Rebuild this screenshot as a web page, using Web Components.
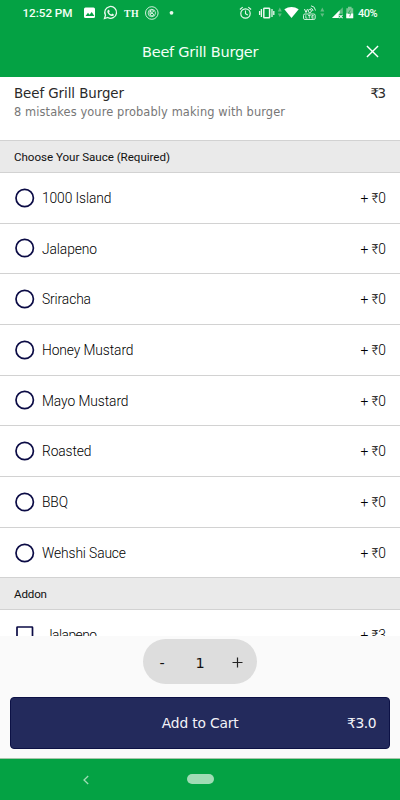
<!DOCTYPE html>
<html lang="en">
<head>
<meta charset="utf-8">
<title>Beef Grill Burger</title>
<style>
html,body{margin:0;height:100%;overflow:hidden}
</style>
</head>
<body>
<burger-screen></burger-screen>
<script>
const define = (name, html, init) => {
  const t = document.createElement('template');
  t.innerHTML = html;
  customElements.define(name, class extends HTMLElement {
    constructor() {
      super();
      this.attachShadow({mode: 'open'}).append(t.content.cloneNode(true));
    }
    connectedCallback() { if (init) init(this, this.shadowRoot); }
  });
};

/* One line of text whose tracking is spread to fill the width given in w. */
define('fit-text', `<style>
:host{display:block;white-space:pre;flex:none}
span{display:inline-block}
</style><span></span>`, (el, root) => {
  const s = root.querySelector('span');
  s.textContent = el.getAttribute('text');
  const w = +el.getAttribute('w');
  const n = s.textContent.length;
  const gap = (w - s.getBoundingClientRect().width) / Math.max(1, n - 1);
  s.style.letterSpacing = gap + 'px';
  s.style.marginRight = -gap + 'px';
});

define('status-bar', `<style>
:host{display:block;height:26px;color:#fff}
svg{display:block}
text{fill:#f4fff6;font-family:Roboto,sans-serif;font-weight:500}
</style>
<svg width="400" height="26" viewBox="0 0 400 26" fill="none" stroke="#e9f8ed">
<text x="22.5" y="17.3" font-size="11.700" textLength="50" stroke="none">12:52 PM</text>
<path d="M85.500 7.500h8q1.500 0 1.500 1.500v7.500q0 1.500-1.500 1.500h-8q-1.500 0-1.500-1.500V9q0-1.500 1.500-1.500z" fill="#fff" stroke="none"/>
<path d="M85.500 16l2.500-3.200 1.600 1.900 2.100-2.800 2.700 4.100z" fill="#04a244" stroke="none"/>
<path d="M104.500 18.500l1-3.300a5.900 5.900 0 1 1 2.300 2.300z" stroke-width="1.300"/>
<path d="M107.800 10.200c.7-.8 1.300-.5 1.600.4l.3.900-.7.900c.5 1 1.300 1.700 2.300 2.100l.9-.9 1.700.9c.2 1.300-1.300 1.900-2.600 1.500-2.300-.7-4.200-2.900-4-4.800z" fill="#e9f8ed" stroke="none"/>
<text x="124" y="16.500" font-size="9.800" textLength="14.500" style="font-family:'Liberation Serif',serif;font-weight:700" stroke="none">TH</text>
<circle cx="151.800" cy="13" r="6.300" stroke-width=".9"/>
<circle cx="151.800" cy="13" r="3.700" stroke-width=".8"/>
<path d="M150 11l2-1.500 1.800 1.600-1.800 1.400-2-1.500v3.700l2 1.500 2-1.500-2-1.700-2 1.500" stroke-width="1"/>
<circle cx="171.500" cy="12.800" r="1.900" fill="#e9f8ed" stroke="none"/>
<circle cx="245.500" cy="13.500" r="4.700" stroke-width="1.200"/>
<path d="M245.500 10.500v3.300l2.300 1.300M239.900 9.500l2.800-2.400M251.100 9.500l-2.800-2.400" stroke-width="1.100"/>
<rect x="263.800" y="8.200" width="5.800" height="9.600" rx=".6" stroke-width="1.500"/>
<path d="M261.400 9v8M259.600 11v4M272 9v8M273.800 11v4" stroke-width="1.300"/>
<g fill="#63bd84" stroke="none"><path d="M277.800 11.500l2-4 2 4zM277.800 13.500h4l-2 3.500zM320.300 11.500l2-4 2 4zM320.300 13.500h4l-2 3.500z"/></g>
<path d="M284.300 9.300q7.200-4.400 14.400 0L291.500 18z" fill="#fff" stroke="none"/>
<path d="M304.500 9l1.500 3.500 1.500-3.500" stroke-width="1"/>
<circle cx="309.800" cy="11" r="1.600" stroke-width=".9"/>
<path d="M310.500 8.200q2.300.2 2.500 2.800M311 5.800q4 .4 4.500 4.700" stroke-width=".9"/>
<rect x="303.500" y="14" width="11.700" height="5.500" rx="1.400" stroke-width=".9"/>
<path d="M305.800 15.200v2.900h1.600M308 15.500h2.600M309.300 15.500v3M313.700 15.500h-1.800v2.700h1.800M312 16.900h1.500" stroke-width=".8"/>
<path d="M332 18L342.800 7.200V18z" fill="#63bd84" stroke="none"/>
<path d="M332 18l7.700-7.800V18z" fill="#fff" stroke="none"/>
<path d="M338.800 13.800h5v5h-5z" fill="#04a244" stroke="none"/>
<path d="M339.300 14.800l3.300 3.300M342.600 14.800l-3.300 3.300" stroke-width="1.100"/>
<path d="M346.300 8.200h1.700V6.800h3.600v1.400h1.600v10h-6.900z" fill="#79c894" stroke="none"/>
<path d="M346.300 13.500h6.900v4.700h-6.900z" fill="#fff" stroke="none"/>
<path d="M350.500 9.700l-2.200 3.600h2.400l-1 3.200" stroke="#04a244" stroke-width=".7"/>
<text x="358" y="17" font-size="11" textLength="19.500" stroke="none">40%</text>
</svg>`);

define('app-header', `<style>
:host{display:grid;grid-template-columns:1fr 116px 1fr;height:51px;align-items:center;color:#f5fff7}
fit-text{font:14.500px/20px "DejaVu Sans",sans-serif;padding-top:1px}
svg{justify-self:end;margin:0 21.500px 1px 0;display:block}
</style><span></span><fit-text text="Beef Grill Burger" w="116.500"></fit-text>
<svg width="13" height="13" viewBox="0 0 14 14"><path d="M1 1l12 12M13 1L1 13" stroke="#fff" stroke-width="1.500"/></svg>`);

define('item-summary', `<style>
:host{display:flex;justify-content:space-between;box-sizing:border-box;height:63px;padding:8px 14px 0;background:#fff;font-family:"DejaVu Sans",sans-serif}
.t{font-size:13.400px;line-height:18px;color:#2a2a2a}
.s{font-size:11.400px;line-height:18px;color:#777}
</style><div><fit-text class="t" text="Beef Grill Burger" w="110"></fit-text><fit-text class="s" text="8 mistakes youre probably making with burger" w="271"></fit-text></div>
<fit-text class="t" text="₹3" w="15.500"></fit-text>`);

define('section-head', `<style>
:host{display:flex;align-items:center;box-sizing:border-box;height:31.900px;padding:1px 14px 0;background:#eaeaea;border-top:1px solid #d2d2d2;font:400 11.600px/16px Roboto,sans-serif;color:#111}
</style><div></div>`, (el, r) => {
  r.querySelector('div').innerHTML =
    '<fit-text text="' + el.getAttribute('label') + '" w="' + el.getAttribute('w') + '"></fit-text>';
});

define('option-row', `<style>
:host{display:flex;align-items:center;box-sizing:border-box;height:50.700px;padding:0 14px 0 15px;background:#fff;border-top:1px solid #d2d2d2;font:300 13.800px/20px Roboto,sans-serif;color:#000}
svg{flex:none;width:20px;height:20px;margin-right:7px}
:host([box]) svg{margin-right:10px}
.c,:host([box]) .r{display:none}:host([box]) .c{display:inline}
.n,.p{padding-top:.5px}
.p{margin-left:auto}
</style><svg viewBox="0 0 20 20" fill="none" stroke="#0b0b45" stroke-width="1.700"><circle class="r" cx="9.700" cy="10" r="8.700"/><rect class="c" x="2" y="2" width="15.500" height="16" rx=".5"/></svg>
<div class="n"></div><div class="p"></div>`, (el, r) => {
  const fit = (q, text, w) => { r.querySelector(q).innerHTML = `<fit-text text="${text}" w="${w}"></fit-text>`; };
  fit('.n', el.getAttribute('label'), el.getAttribute('w'));
  fit('.p', '+ ₹' + (el.getAttribute('price') || 0), 25.5);
});

define('quantity-stepper', `<style>
:host{display:grid;grid-template-columns:repeat(3,1fr);align-items:center;justify-items:center;width:114px;height:45px;border-radius:23px;background:#ddd;color:#111;font:14.500px/22px "DejaVu Sans",sans-serif}
span{padding-top:2px}
svg{margin:2px 2px 0 0}
</style><span>-</span><span>1</span><svg width="11" height="11" viewBox="0 0 11 11"><path d="M.5 5.500h10M5.500.5v10" stroke="#222" stroke-width="1.200"/></svg>`);

define('cart-button', `<style>
:host{display:grid;grid-template-columns:1fr 76.500px 1fr;align-items:center;box-sizing:border-box;height:52px;border-radius:4px;background:#232a5c;border:1px solid #0c1145;color:#f3f3f7;font:13.800px/20px "DejaVu Sans",sans-serif}
.p{justify-self:end;margin-right:12.500px}
</style><span></span><fit-text text="Add to Cart" w="77"></fit-text><fit-text class="p" text="₹3.0" w="29.500"></fit-text>`);

define('nav-bar', `<style>
:host{display:grid;grid-template-columns:1fr 27px 1fr;align-items:center;height:41px;background:#04a244}
i{height:10px;border-radius:5px;background:#a0dcb5;margin-bottom:1px}
svg{justify-self:end;margin-right:97.500px}
</style><svg width="6" height="10" viewBox="0 0 6 10"><path d="M5.200 1L1 5l4.200 4" fill="none" stroke="#a0dcb5" stroke-width="1.300"/></svg><i></i>`);

define('burger-screen', `<style>
:host{display:flex;flex-direction:column;width:400px;height:800px;background:#fafafa}
.top{height:77px;background:#04a244;flex:none}
.list{height:558.500px;overflow:hidden;flex:none;background:#fff}
.foot{flex:1;display:flex;flex-direction:column;align-items:center;padding-top:3.500px}
cart-button{width:380px;margin-top:13px}
nav-bar{flex:none;border-top:1px solid #a7c5aa}
</style>
<div class="top"><status-bar></status-bar><app-header></app-header></div>
<div class="list">
<item-summary></item-summary>
<section-head label="Choose Your Sauce (Required)" w="156"></section-head>
<option-row label="1000 Island" w="69.500"></option-row>
<option-row label="Jalapeno" w="55"></option-row>
<option-row label="Sriracha" w="49"></option-row>
<option-row label="Honey Mustard" w="91.500"></option-row>
<option-row label="Mayo Mustard" w="86.500"></option-row>
<option-row label="Roasted" w="49.500"></option-row>
<option-row label="BBQ" w="26"></option-row>
<option-row label="Wehshi Sauce" w="84"></option-row>
<section-head label="Addon" w="33"></section-head>
<option-row box label="Jalapeno" w="52" price="3"></option-row>
</div>
<div class="foot"><quantity-stepper></quantity-stepper><cart-button></cart-button></div>
<nav-bar></nav-bar>`);
</script>
</body>
</html>
